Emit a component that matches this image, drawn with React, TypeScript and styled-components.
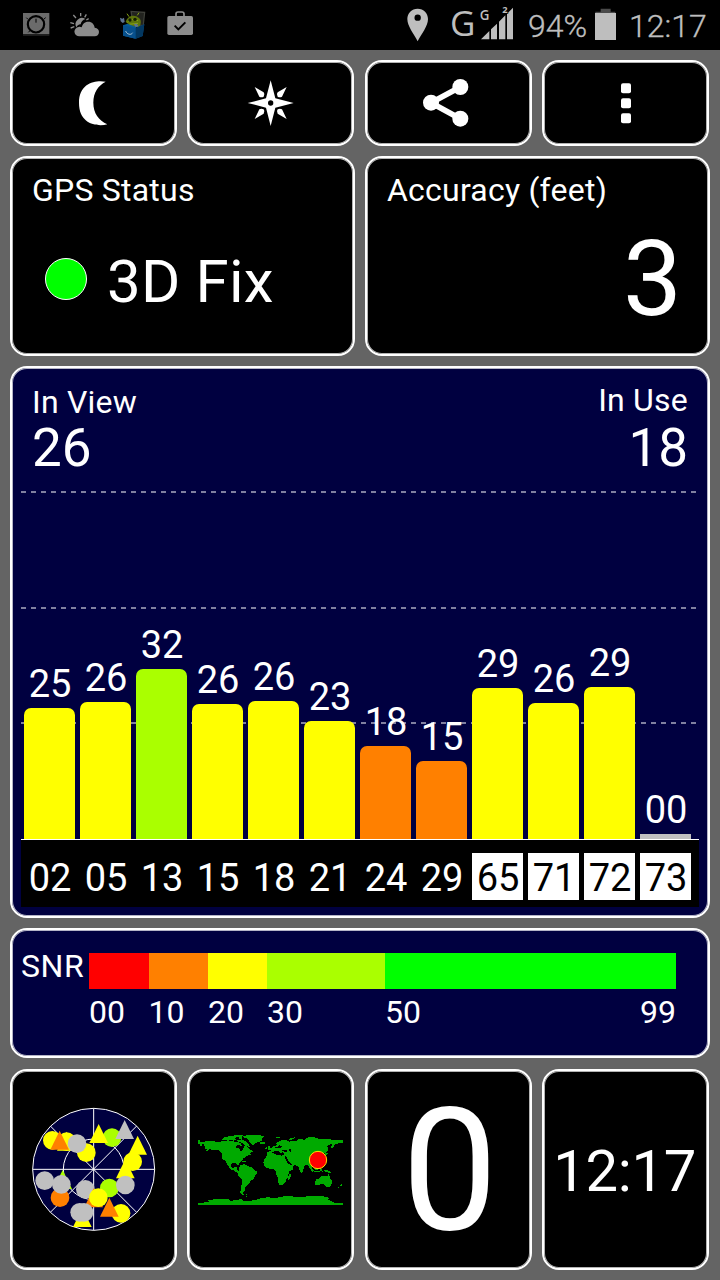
import React from "react";
import styled, { createGlobalStyle } from "styled-components";

const NAVY = "#000040";
const YELLOW = "#ffff00";
const ORANGE = "#ff8000";
const LIME = "#aaff00";
const GREEN = "#00ff00";
const SILVER = "#c0c0c0";

const GlobalStyle = createGlobalStyle`
  * { box-sizing: border-box; }
  body { margin: 0; background: #646464; }
`;

const Screen = styled.div`
  width: 720px;
  height: 1280px;
  background: #646464;
  color: #fff;
  font-family: Roboto, "Noto Sans", sans-serif;
  overflow: hidden;
`;

const StatusBar = styled.header`
  height: 50px;
  background: #000;
  color: #bebebe;
  display: flex;
  justify-content: space-between;
  padding: 0 12px 0 22px;
`;

const Notifications = styled.div`
  display: flex;
  padding-top: 8px;
  gap: 19px;
`;

const SystemIcons = styled.div`
  display: flex;
  align-items: flex-start;
`;

const StatusText = styled.span<{ $w: number }>`
  width: ${(p) => p.$w}px;
  font-size: 32px;
  font-weight: 300;
  line-height: 52px;
  white-space: nowrap;
  -webkit-text-stroke: 0.35px #bebebe;
`;

const Network = styled.span`
  width: 29px;
  font-family: "Open Sans", "Noto Sans", sans-serif;
  font-size: 35px;
  line-height: 46px;
`;

const Content = styled.main`
  display: flex;
  flex-direction: column;
  padding: 10px;
`;

const QuadRow = styled.div<{ $h: number; $mb?: number }>`
  display: grid;
  grid-template-columns: repeat(4, 167px);
  grid-template-rows: ${(p) => p.$h}px;
  column-gap: 10.4px;
  margin-bottom: ${(p) => p.$mb ?? 0}px;
`;

const HalfRow = styled.div`
  display: grid;
  grid-template-columns: 345px 345px;
  column-gap: 10px;
  height: 200px;
  margin-bottom: 10px;
`;

const Card = styled.section<{ $bg?: string }>`
  background: ${(p) => p.$bg ?? "#000"};
  border: 2px solid #fff;
  border-radius: 17px;
  box-shadow: inset 0 0 0 1px rgba(255, 255, 255, 0.7);
  min-width: 0;
`;

const IconCard = styled(Card)`
  display: flex;
  align-items: center;
  justify-content: center;
`;

const InfoCard = styled(Card)`
  padding: 13px 26px 0 20px;
`;

const Title = styled.div`
  font-size: 32px;
  line-height: 38px;
  letter-spacing: 0.22px;
  white-space: nowrap;
`;

const FixRow = styled.div`
  display: flex;
  align-items: center;
  margin-top: 36px;
  padding-left: 13px;
  font-size: 60px;
  line-height: 70px;
  letter-spacing: 0.2px;
  white-space: nowrap;
`;

const Lamp = styled.span`
  width: 42px;
  height: 42px;
  margin: 0 20px 5px 0;
  border-radius: 50%;
  border: 1.5px solid #fff;
  background: ${GREEN};
`;

const FixText = styled.span`
  margin-top: 2px;
`;

const AccuracyValue = styled.div`
  margin-top: 11px;
  text-align: right;
  font-size: 105px;
  line-height: 120px;
`;

const ChartCard = styled(Card)`
  height: 552px;
  margin-bottom: 10px;
  padding: 0 9px;
`;

const ChartHeader = styled.div`
  display: flex;
  justify-content: space-between;
  height: 123px;
  padding: 13px 11px 0;
`;

const Count = styled.div<{ $right?: boolean }>`
  padding-top: ${(p) => (p.$right ? 0 : 2)}px;
  text-align: ${(p) => (p.$right ? "right" : "left")};
`;

const CountValue = styled.div<{ $right?: boolean }>`
  font-size: 53px;
  line-height: 60px;
  margin-top: ${(p) => (p.$right ? -1 : -3)}px;
`;

const dash = "repeating-linear-gradient(90deg, #8080a0 0 5px, transparent 5px 10px)";

const Plot = styled.div`
  display: flex;
  align-items: flex-end;
  gap: 5px;
  height: 349px;
  padding-left: 3px;
  border-bottom: 1px solid #fff;
  background-image: ${dash}, ${dash}, ${dash};
  background-size: 675px 2px;
  background-repeat: no-repeat;
  background-position: 0 0, 0 116px, 0 231px;
`;

const Column = styled.div`
  width: 51px;
`;

const BarLabel = styled.div`
  font-size: 38px;
  line-height: 46px;
  margin: 0 -5px 1px -4px;
  text-align: center;
`;

const Bar = styled.div<{ $c: string; $h: number }>`
  height: ${(p) => p.$h}px;
  background: ${(p) => p.$c};
  border-radius: ${(p) => (p.$h > 10 ? "7px 7px 0 0" : "0")};
`;

const IdStrip = styled.div`
  display: flex;
  gap: 5px;
  height: 67px;
  padding: 13px 3px 0;
  background: #000;
`;

const SatId = styled.div<{ $inverse: boolean }>`
  width: 51px;
  height: 47px;
  padding-left: 1px;
  font-size: 38px;
  line-height: 51px;
  display: flex;
  justify-content: center;
  background: ${(p) => (p.$inverse ? "#fff" : "transparent")};
  color: ${(p) => (p.$inverse ? "#000" : "#fff")};
`;

const SnrCard = styled(Card)`
  display: flex;
  height: 130px;
  margin-bottom: 11px;
  padding: 17px 0 0 9px;
`;

const SnrName = styled(Title)`
  width: 68px;
  letter-spacing: 0.6px;
`;

const Legend = styled.div`
  display: flex;
  padding-top: 6px;
  width: 587px;
`;

const LegendPart = styled.div<{ $w: number }>`
  width: ${(p) => p.$w}px;
`;

const Swatch = styled.div<{ $c: string }>`
  height: 36px;
  background: ${(p) => p.$c};
`;

const LegendLabels = styled.div`
  display: flex;
  justify-content: space-between;
  font-size: 32px;
  line-height: 46px;
`;

const Speed = styled.span`
  font-size: 171px;
  line-height: 180px;
  margin-top: 3px;
  padding-left: 3px;
`;

const Clock = styled.span`
  font-size: 58px;
  line-height: 70px;
  letter-spacing: -0.3px;
  margin-top: 3px;
  padding-right: 2px;
`;

const bars: { id: string; snr: string; h: number; c: string }[] = [
  { id: "02", snr: "25", h: 131, c: YELLOW },
  { id: "05", snr: "26", h: 137, c: YELLOW },
  { id: "13", snr: "32", h: 170, c: LIME },
  { id: "15", snr: "26", h: 135, c: YELLOW },
  { id: "18", snr: "26", h: 138, c: YELLOW },
  { id: "21", snr: "23", h: 118, c: YELLOW },
  { id: "24", snr: "18", h: 93, c: ORANGE },
  { id: "29", snr: "15", h: 78, c: ORANGE },
  { id: "65", snr: "29", h: 151, c: YELLOW },
  { id: "71", snr: "26", h: 136, c: YELLOW },
  { id: "72", snr: "29", h: 152, c: YELLOW },
  { id: "73", snr: "00", h: 5, c: SILVER },
];

const legend: { label: string; end?: string; w: number; c: string }[] = [
  { label: "00", w: 59.5, c: "#ff0000" },
  { label: "10", w: 59.5, c: ORANGE },
  { label: "20", w: 59, c: YELLOW },
  { label: "30", w: 118, c: LIME },
  { label: "50", end: "99", w: 291, c: GREEN },
];

function AppIcon() {
  return (
    <svg width="28" height="32" viewBox="66 24 84 96">
      <rect x="69" y="39" width="79" height="64" fill="#6b6b6b" />
      <rect x="69" y="104" width="79" height="4" fill="#1c1c1c" />
      <circle cx="108" cy="73" r="24.5" fill="none" stroke="#000" strokeWidth="6.5" />
      <path d="M108 56V68M84 58l-5-5M131 58l6-5M90 92l-5 5" stroke="#000" strokeWidth="3" />
    </svg>
  );
}

function WeatherIcon() {
  return (
    <svg width="31" height="32" viewBox="204 24 93 96">
      <g stroke="#8c8c8c" strokeWidth="4" fill="none">
        <path d="M239 39V49M217 45l8 9M256 43l-5 9M208 68l11 3M209 84l11-4M222 96l6-5M263 56l-7 4" />
      </g>
      <path d="M226 82a19 19 0 0 1 27-25c-7 2-13 9-14 16-7 1-10 4-13 9z" fill="#8c8c8c" />
      <path d="M236 109a14 14 0 0 1-3-28c4-1 6 0 9 1 3-12 11-17 20-17 11 0 18 8 19 18 9 1 13 7 13 13 0 8-6 13-13 13z" fill="#8c8c8c" />
    </svg>
  );
}

function AndroidBoxIcon() {
  return (
    <svg width="28" height="32" viewBox="354 24 84 96">
      <path d="M388 32l45 3-5 45-34-8z" fill="#3f403a" />
      <path d="M393 36l36 3-4 36-30-6z" fill="#22231f" />
      <path d="M374 66c4-17 25-26 41-11 7 7 5 19-1 27l-20-1z" fill="#5d740b" />
      <path d="M384 50l-6-9M409 46l5-8M379 67c8-9 21-11 32-5M383 73l28-3" stroke="#86a313" strokeWidth="3" fill="none" />
      <circle cx="387" cy="60" r="5" fill="#131c05" />
      <circle cx="402" cy="58" r="5" fill="#131c05" />
      <path d="M357 53l7 3 5-3 2 13-6 3-6-5z" fill="#5d7291" />
      <path d="M399 72l8-1 6 8-10 3z" fill="#5d7291" />
      <path d="M366 76l14-5 25 10-1 35-38-9z" fill="#075a96" />
      <path d="M366 76l38 8 26-11-5 35-21 8-38-9z" fill="#07508c" />
      <path d="M404 84l26-11-5 35-21 8z" fill="#033760" />
      <path d="M374 93c3 10 17 14 21 5" stroke="#9eb8cd" strokeWidth="3" fill="none" />
    </svg>
  );
}

function StoreIcon() {
  return (
    <svg width="28" height="32" viewBox="498 24 84 96">
      <path d="M528 48v-6q0-6 6-6h12q6 0 6 6v6" fill="none" stroke="#8c8c8c" strokeWidth="5" />
      <rect x="502" y="48" width="77" height="57" rx="5" fill="#8c8c8c" />
      <path d="M524 77l11 11 21-21" stroke="#000" strokeWidth="6" fill="none" />
    </svg>
  );
}

function PinIcon() {
  return (
    <svg width="44" height="50" viewBox="138 0 132 150">
      <path d="M173 26c-18 0-31 14-31 31 0 22 20 45 31 67 11-22 31-45 31-67 0-17-13-31-31-31z" fill="#bebebe" />
      <circle cx="173" cy="53" r="9.5" fill="#000" />
    </svg>
  );
}

function SignalIcon() {
  return (
    <svg width="49" height="50" viewBox="354 0 147 150" fill="#bebebe">
      <path d="M360 118l25-25v25zM390 88l18-17v47h-18zM414 65l19-19v72h-19zM438 41l18-18v95h-18z" />
      <text x="356" y="59" fontSize="45" fontWeight="600" fontFamily="Open Sans" textLength="29" lengthAdjust="spacingAndGlyphs">G</text>
      <text x="424" y="38" fontSize="28" fontWeight="700" fontFamily="Open Sans" stroke="#000" strokeWidth="5" paintOrder="stroke">2</text>
    </svg>
  );
}

function BatteryIcon() {
  return (
    <svg width="35" height="50" viewBox="702 0 105 150">
      <path d="M722 26h30v9h14v6h-60v-6h16z" fill="#4a4a4a" />
      <rect x="705" y="39" width="63" height="81" fill="#bebebe" />
    </svg>
  );
}

function MoonIcon() {
  return (
    <svg width="163" height="82" viewBox="36 186 489 246">
      <path d="M317 245C291 240 237 245 237 309S292 381 322 373C296 361 280 340 280 308S295 257 317 245z" fill="#fff" />
    </svg>
  );
}

function CompassIcon() {
  return (
    <svg width="163" height="82" viewBox="28 36 489 246" fill="#fff">
      <path d="M273 91L287 145L342 159L287 173L273 228L259 173L204 159L259 145Z" />
      <path d="M225 111l27 16q5 6 0 13-7 4-13 0zM321 111l-27 16q-5 6 0 13 7 4 13 0zM225 207l27-16q5-6 0-13-7-4-13 0zM321 207l-27-16q-5-6 0-13 7-4 13 0z" />
      <circle cx="273" cy="159" r="8" fill="#000" />
    </svg>
  );
}

function ShareIcon() {
  return (
    <svg width="163" height="82" viewBox="21 186 489 246" fill="#fff">
      <path d="M301 261L213 308L301 356" fill="none" stroke="#fff" strokeWidth="17" />
      <circle cx="301" cy="261" r="24" />
      <circle cx="213" cy="308" r="24" />
      <circle cx="301" cy="356" r="24" />
    </svg>
  );
}

function MoreIcon() {
  return (
    <svg width="163" height="82" viewBox="552 186 489 246" fill="#fff">
      <rect x="783" y="250" width="30" height="30" rx="6" />
      <rect x="783" y="295" width="30" height="30" rx="6" />
      <rect x="783" y="340" width="30" height="30" rx="6" />
    </svg>
  );
}

type Sat = [kind: "c" | "t", x: number, y: number, color: string];

const sats: Sat[] = [
  ["c", 97, 136, YELLOW],
  ["c", 140, 140, YELLOW],
  ["t", 139, 139, YELLOW],
  ["t", 119, 136, ORANGE],
  ["c", 199, 173, YELLOW],
  ["c", 171, 146, SILVER],
  ["c", 276, 128, LIME],
  ["t", 236, 116, YELLOW],
  ["t", 314, 104, SILVER],
  ["t", 353, 151, YELLOW],
  ["c", 338, 200, YELLOW],
  ["t", 316, 222, YELLOW],
  ["t", 128, 254, LIME],
  ["c", 74, 257, SILVER],
  ["c", 120, 308, ORANGE],
  ["c", 124, 268, SILVER],
  ["c", 268, 279, LIME],
  ["c", 316, 270, SILVER],
  ["c", 196, 283, SILVER],
  ["t", 221, 309, ORANGE],
  ["c", 235, 308, YELLOW],
  ["c", 303, 355, YELLOW],
  ["t", 268, 337, ORANGE],
  ["t", 187, 368, YELLOW],
  ["c", 179, 352, SILVER],
  ["c", 192, 352, SILVER],
];

function SkyView() {
  return (
    <svg width="153" height="151" viewBox="-9 -3 459 453">
      <circle cx="221" cy="223" r="183" fill={NAVY} stroke="#fff" strokeWidth="3" />
      <g fill="none" stroke="#fff" strokeWidth="3">
        <circle cx="221" cy="223" r="91" />
        <path d="M221 40V406M38 223H404" />
        <path d="M91 93L350 352M350 93L91 352" />
      </g>
      {sats.map(([kind, x, y, color], i) =>
        kind === "c" ? (
          <circle key={i} cx={x} cy={y} r="28" fill={color} />
        ) : (
          <path key={i} d={`M${x} ${y - 29}L${x + 28} ${y + 28}H${x - 28}Z`} fill={color} />
        )
      )}
    </svg>
  );
}

function WorldMap() {
  return (
    <svg width="163" height="101" viewBox="12 -3 489 303">
      <g fill="#00aa00" shapeRendering="crispEdges">
        <path d="M39 61h7v4h12l8-2 18 1 14 1 22-1 9-3 16 2 8 5 5-2 9 3 3 8-5 5 10 4 4-8 8 2 6 8 6 1 5 5-9 6 2 4-12 4-11 8-3 7-8 5-1 8-5 0-3-6-10-1-5 5 0 7 6 4 5-4 6-1-2 8 6 2 0 6 6 2-2 4-8-4-8-6-11-4-6-8-6-10-5-8-7-5-3-9 0-7-6-9-9-3-11 1-10-2-8 5-7 2 7-6-7-4 2-5-6-4 4-3h-9v4h-5v-4h-5z" />
        <path d="M109 60l6-6 8 1-2 5zM118 52h12l-4-5h14v5h8l6 8-9 2-10-3-9 2zM135 49l13-3 16-1 15-1-7 5-12 3-13 1zM157 61l12-3 13 5 10 9 2 8-9-1-9-5-2-5-13-3zM160 51h12v7h-9z" />
        <path d="M172 50l14-4 18-1 22 1 10 3-6 7 1 5-8 5-9 2-9 7-6-3-7-8-4-8-9-2zM225 66h13l2 4-8 3-6-2z" />
        <path d="M147 119h12v3h8v3h-8l-11-3zM170 122h12v4h-10z" />
        <path d="M164 137l10-4 10 1 9 7 9 2 5 7 9 4-2 9-5 6-2 8-10 4-4 8-8 8-5 7-1 8-5 7 2 5 4 2-8-1-6-5 1-13 3-14 1-14-7-6-6-9 1-9 4-9z" />
        <path d="M247 106l0-11 10-1 2-5-6-3 9-4 7-5 6-1-1-6 8-6 10-4 12 0 8 5 12-2 11 1 2-5 11-2 9 3 8-5 8-4 14 1 14 4 13 2 20 0 15 2 10 0 15 1v7l-10 1-7 3-5-1-5 7-6 9-3-8 6-8-12 3-6 5 4 5 0 7-6 6-7 2 2 6-4 5-4-2-4-2 0 11-6 11-10 5-7 3-4 4 4 12-2 4-7-10-5-10-6-2-6 6-4 9-2 10-4 1-4-10-4-11-9-4-12-2-7-7-6-3 8 11 11 7-2 8-12 6-4 5-6-6-9-14-6-12 2-7-10 1-10-7-9-1-6 4-10 2z" />
        <path d="M245 104l18-1 12 3 14 3 10 1 6 10 7 11 4 5 11-1-3 8-12 11-2 9 0 9-6 7-3 8-9 9-8 0-5-8 0-12-4-10-2-11-5-7-12-2-10-1-7-7-4-9 3-11 6-8z" />
        <path d="M251 77h5v7h6v7h-14v-3zM242 82h5v6h-6zM271 51h14v3h-7zM311 58l9-5 12-1-3 3-13 5zM367 54h15v3h-13zM414 59h11v3h-12zM426 81h4v12h-4zM423 98h6v4l-4 4-6 1v-4zM311 165l6-4 1 7-5 11-5 0zM352 137h3v5h-3z" />
        <path d="M372 134l7 6 7 11 4 3-6-1-7-8-6-7zM388 144l8-5 6 5-5 7-8-1zM387 154l17 0 6 3-20 0zM405 145l7 1-2 5 3 4-6-1zM416 148l7 2 13 4 3 6-10-2-9-3zM409 121h4v8l5 5h-6zM408 140h6v3h-6z" />
        <path d="M394 178l9-3 7-6 7-3 4 2 5 2 4-8 3 5 3 8 5 6 -1 9-3 7-5 5-7-1-5-6-8-3-9 2-9 2-4-2 0-8zM427 199h6l-2 4zM467 191l5 4-6 4zM464 198l-4 6h-3z" />
        <path d="M39 248h17l19-4-6-3 17-3 28 0 17 0 6 4 15-1 12-3 10 0 6-6 8-4-6-5 7-2-6 8-5 6-8 5 7 4 13 0 24-5 12-4 22-3 26 2 15-4 26-2 24 4 17-1 22-4 22 1 23 2 11 4 -6 3 8 5 10 5v8H39z" />
        <path d="M440 248h33v7h-33z" />
      </g>
      <g fill="#000" shapeRendering="crispEdges">
        <path d="M154 77l7-3 6 5 8 4-2 7-5 4-6-8-8-3z" />
        <path d="M261 98l8-5 9-1 8 8 4 0 2-5 4 3 2 7-8 2-13-2-10-4zM290 91l10-2 8 3-4 3-14-1zM313 88h4v9l-3-1zM270 83l10-4 4-6 1 6 8 0-6 5-13 1z" />
        <path d="M299 109l4 0 8 15 3 8-4 0-9-15z" />
      </g>
      <circle cx="399" cy="120" r="26" fill="#ff0000" stroke="#ffe000" strokeWidth="3" />
    </svg>
  );
}

export default function App() {
  return (
    <Screen>
      <GlobalStyle />
      <StatusBar>
        <Notifications>
          <AppIcon />
          <WeatherIcon />
          <AndroidBoxIcon />
          <StoreIcon />
        </Notifications>
        <SystemIcons>
          <PinIcon />
          <Network>G</Network>
          <SignalIcon />
          <StatusText $w={66}>94%</StatusText>
          <BatteryIcon />
          <StatusText $w={79}>12:17</StatusText>
        </SystemIcons>
      </StatusBar>
      <Content>
        <QuadRow $h={86} $mb={10}>
          <IconCard><MoonIcon /></IconCard>
          <IconCard><CompassIcon /></IconCard>
          <IconCard><ShareIcon /></IconCard>
          <IconCard><MoreIcon /></IconCard>
        </QuadRow>
        <HalfRow>
          <InfoCard>
            <Title>GPS Status</Title>
            <FixRow><Lamp /><FixText>3D Fix</FixText></FixRow>
          </InfoCard>
          <InfoCard>
            <Title>Accuracy (feet)</Title>
            <AccuracyValue>3</AccuracyValue>
          </InfoCard>
        </HalfRow>
        <ChartCard $bg={NAVY}>
          <ChartHeader>
            <Count>
              <Title>In View</Title>
              <CountValue>26</CountValue>
            </Count>
            <Count $right>
              <Title>In Use</Title>
              <CountValue $right>18</CountValue>
            </Count>
          </ChartHeader>
          <Plot>
            {bars.map((b) => (
              <Column key={b.id}>
                <BarLabel>{b.snr}</BarLabel>
                <Bar $c={b.c} $h={b.h} />
              </Column>
            ))}
          </Plot>
          <IdStrip>
            {bars.map((b) => (
              <SatId key={b.id} $inverse={Number(b.id) >= 65}>{b.id}</SatId>
            ))}
          </IdStrip>
        </ChartCard>
        <SnrCard $bg={NAVY}>
          <SnrName>SNR</SnrName>
          <Legend>
            {legend.map((l) => (
              <LegendPart key={l.label} $w={l.w}>
                <Swatch $c={l.c} />
                <LegendLabels>
                  <span>{l.label}</span>
                  {l.end && <span>{l.end}</span>}
                </LegendLabels>
              </LegendPart>
            ))}
          </Legend>
        </SnrCard>
        <QuadRow $h={201}>
          <IconCard><SkyView /></IconCard>
          <IconCard><WorldMap /></IconCard>
          <IconCard><Speed>0</Speed></IconCard>
          <IconCard><Clock>12:17</Clock></IconCard>
        </QuadRow>
      </Content>
    </Screen>
  );
}
